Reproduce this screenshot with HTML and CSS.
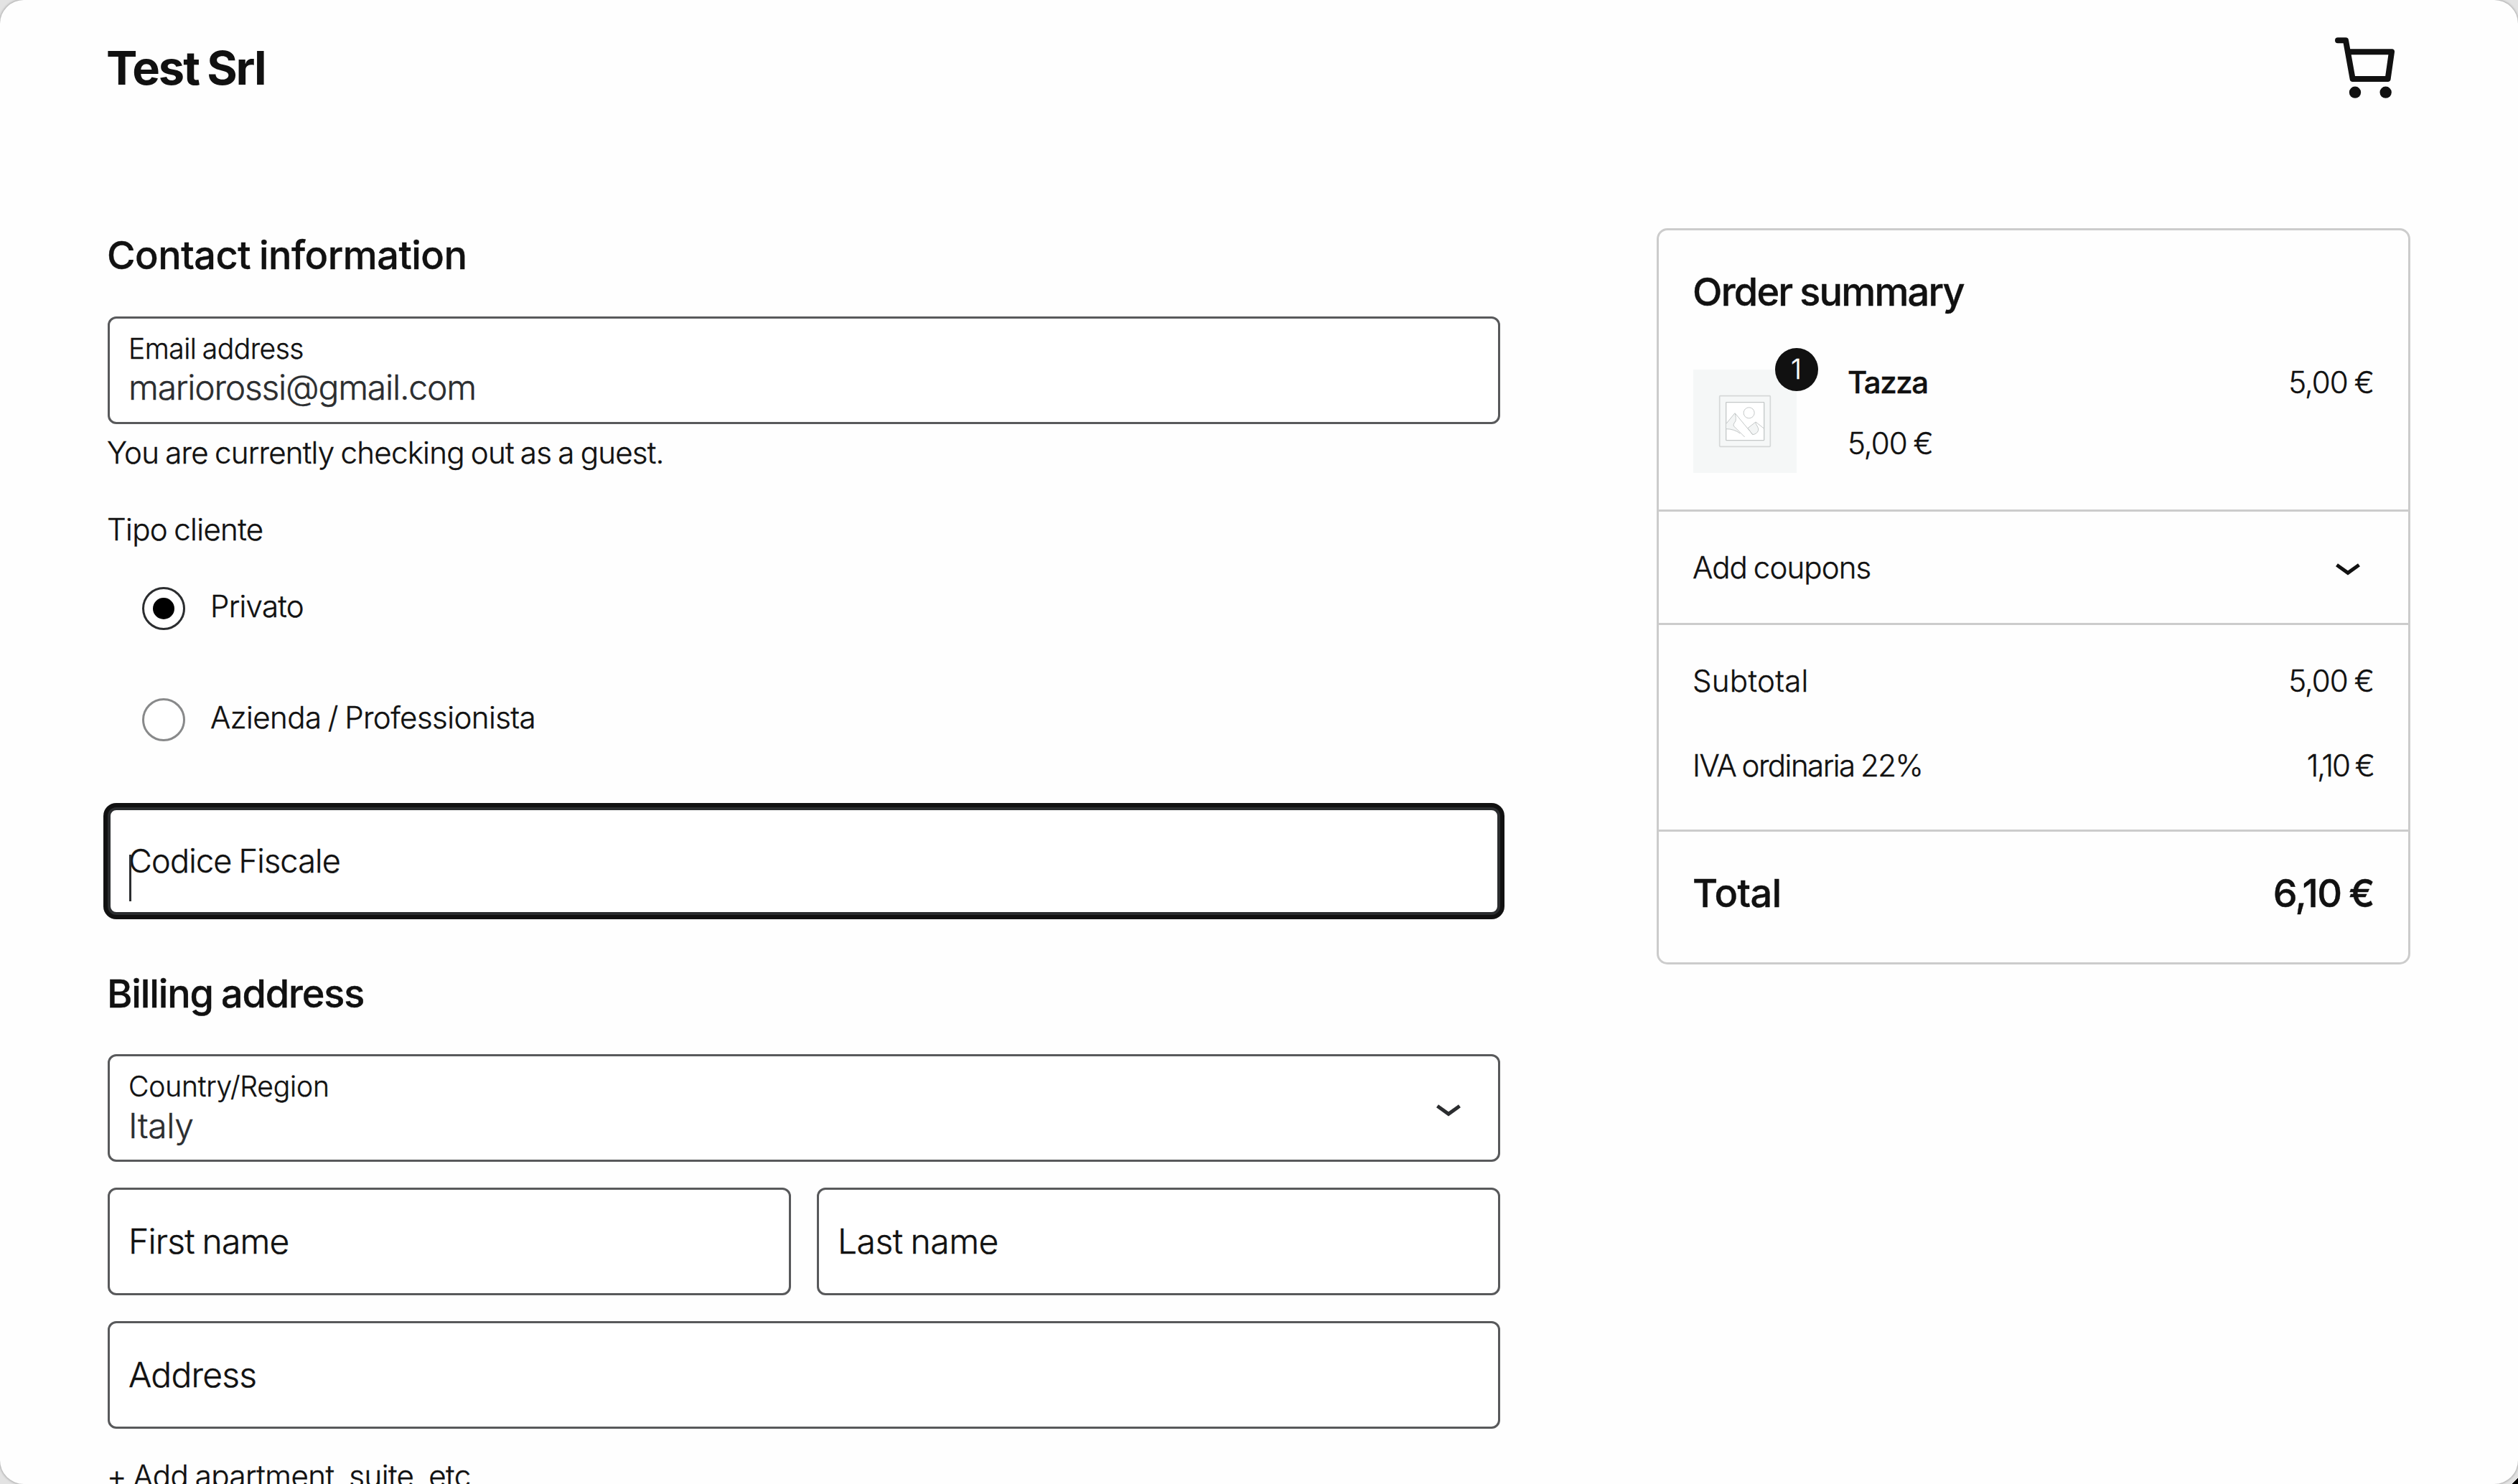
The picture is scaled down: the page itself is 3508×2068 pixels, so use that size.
FILE: index.html
```html
<!DOCTYPE html>
<html lang="en">
<head>
<meta charset="utf-8">
<title>Checkout – Test Srl</title>
<link rel="stylesheet" href="styles.css">
</head>
<body>
<div class="window">
  <header class="site-header">
    <div class="site-title">Test Srl</div>
    <svg class="cart-icon" viewBox="158 156 249 255" aria-hidden="true">
      <path d="M170 169H203L232 330H379L395 217H213" fill="none" stroke="currentColor" stroke-width="24" stroke-linecap="round" stroke-linejoin="round"/>
      <circle cx="242" cy="386" r="24.5" fill="currentColor"/>
      <circle cx="370" cy="386" r="24.5" fill="currentColor"/>
    </svg>
  </header>

  <div class="checkout">
    <main class="form">
      <h2 class="heading contact-heading">Contact information</h2>
      <div class="field field-filled">
        <span class="field-label email-label">Email address</span>
        <span class="field-value email-value">mariorossi@gmail.com</span>
      </div>
      <p class="guest-note">You are currently checking out as a guest.</p>

      <p class="group-label">Tipo cliente</p>
      <div class="radio-group">
        <div class="radio-row">
          <span class="radio radio-checked"></span>
          <span class="radio-text privato">Privato</span>
        </div>
        <div class="radio-row">
          <span class="radio"></span>
          <span class="radio-text azienda">Azienda / Professionista</span>
        </div>
      </div>

      <div class="field field-focused">
        <span class="field-placeholder moving-label">Codice Fiscale</span>
        <span class="caret"></span>
      </div>

      <h2 class="heading billing-heading">Billing address</h2>
      <div class="fields">
        <div class="field field-filled field-select">
          <span class="field-label">Country/Region</span>
          <span class="field-value country-value">Italy</span>
          <svg class="chevron select-chevron" viewBox="0 0 34 17" aria-hidden="true"><path d="M1.5 2.2L17 13.4L32.5 2.2"/></svg>
        </div>
        <div class="field-row">
          <div class="field"><span class="field-placeholder">First name</span></div>
          <div class="field"><span class="field-placeholder last-name">Last name</span></div>
        </div>
        <div class="field"><span class="field-placeholder">Address</span></div>
      </div>
      <p class="add-line">+ Add apartment, suite, etc</p>
    </main>

    <aside class="summary">
      <section class="summary-order">
        <h2 class="heading order-heading">Order summary</h2>
        <div class="item">
          <div class="thumb">
            <svg class="thumb-image" viewBox="0 0 432 432" aria-hidden="true">
              <rect width="432" height="432" fill="#f5f7f7"/>
              <g fill="none" stroke="#c4c8c8" stroke-width="3">
                <rect x="110" y="110" width="212" height="212" rx="3" stroke="#d5d8d8" stroke-width="5"/>
                <rect x="137" y="137" width="159" height="159" rx="2" fill="#fff" stroke-width="4"/>
                <path d="M138 226L174 182L177 215Q166 232 171 238L196 267Q170 249 138 248Z" fill="#f3f5f5" stroke="none"/>
                <path d="M228 245L261 219Q260 228 266 234Q274 246 272 254Q266 270 248 272Z" fill="#f3f5f5"/>
                <circle cx="233" cy="181" r="22.5"/>
                <path d="M138 226L174 182L248 271M175 184Q180 204 177 215Q164 232 170 237L215 282M138 248Q170 248 196 267M261 219L295 246"/>
              </g>
            </svg>
            <span class="badge">1</span>
          </div>
          <div class="item-info">
            <div class="item-head"><span class="item-name">Tazza</span><span class="price">5,00 €</span></div>
            <span class="price">5,00 €</span>
          </div>
        </div>
      </section>
      <section class="summary-coupons">
        <span class="coupons-text">Add coupons</span>
        <svg class="chevron coupons-chevron" viewBox="0 0 34 17" aria-hidden="true"><path d="M1.5 2.2L17 13.4L32.5 2.2"/></svg>
      </section>
      <section class="summary-lines">
        <div class="line"><span class="subtotal">Subtotal</span><span class="price">5,00 €</span></div>
        <div class="line"><span class="tax">IVA ordinaria 22%</span><span class="price tax-price">1,10 €</span></div>
      </section>
      <section class="summary-total">
        <span class="total-text">Total</span><span class="total-price">6,10 €</span>
      </section>
    </aside>
  </div>
</div>
</body>
</html>
```
FILE: styles.css
```css
* { box-sizing: border-box; }

html { height: 2068px; overflow: hidden; }

body {
  margin: 0;
  height: 2068px;
  overflow: hidden;
  background: linear-gradient(135deg, #e3e3e3 calc(100% - 6px), #000 calc(100% - 6px));
  color: #111;
  font-family: Inter, "Noto Sans", sans-serif;
  font-size: 42px;
  font-weight: 300;
  line-height: 60px;
  text-indent: -1px;
  word-spacing: -2px;
  -webkit-text-stroke: 0.4px currentColor;
}

h2, p { margin: 0; }

.window {
  height: 2068px;
  overflow: hidden;
  border-radius: 33px;
  background: #fefefe;
  box-shadow: 0 0 3px 1px #aaa;
}

/* Header */
.site-header {
  display: flex;
  justify-content: space-between;
  align-items: flex-start;
  height: 318px;
  padding: 50px 172px 0 149px;
}
.site-title {
  font-size: 65px;
  font-weight: 700;
  line-height: 90px;
  letter-spacing: -2.1px;
  -webkit-text-stroke: 0;
}
.cart-icon { width: 83px; height: 85px; margin-top: 2px; }

.checkout {
  display: grid;
  grid-template-columns: 1940px 1050px;
  justify-content: space-between;
  align-items: start;
  padding: 0 150px;
}

/* Form column */
.form { display: flex; flex-direction: column; padding-top: 3px; }
.heading { font-size: 54px; font-weight: 500; line-height: 70px; }
.contact-heading { margin-bottom: 50px; letter-spacing: -0.5px; }
.billing-heading { margin: 75px 0 49px; letter-spacing: -1.15px; }

.field {
  display: flex;
  align-items: center;
  height: 150px;
  padding: 0 27px;
  border: 3px solid #58595b;
  border-radius: 12px;
  background: #fff;
}
.field-filled {
  flex-direction: column;
  align-items: flex-start;
  gap: 6px;
  padding-top: 22px;
}
.field-label { font-size: 39px; line-height: 40px; letter-spacing: -0.18px; }
.email-label { letter-spacing: -0.5px; }
.field-value { color: #2b2d2f; font-size: 48px; line-height: 55px; }
.email-value { letter-spacing: -1.22px; }
.country-value { letter-spacing: -0.4px; line-height: 57px; }
.field-placeholder { font-size: 48px; line-height: 60px; letter-spacing: -0.8px; }
.last-name { letter-spacing: -0.5px; }

.guest-note { margin-top: 10px; letter-spacing: -0.73px; }
.group-label { margin-top: 47px; letter-spacing: -0.65px; }

.radio-group {
  display: flex;
  flex-direction: column;
  gap: 95px;
  margin-top: 50px;
  padding-left: 48px;
}
.radio-row { display: flex; gap: 36px; height: 60px; }
.radio {
  display: flex;
  width: 60px;
  height: 60px;
  border: 3px solid #88898a;
  border-radius: 50%;
  background: #fff;
}
.radio-checked { border-color: #2b2d2f; }
.radio-checked::after {
  content: "";
  width: 30px;
  height: 30px;
  margin: auto;
  border-radius: 50%;
  background: #000;
}
.radio-text { line-height: 53px; }
.privato { letter-spacing: -0.7px; }
.azienda { letter-spacing: -0.54px; }

.field-focused {
  position: relative;
  margin-top: 92px;
  padding: 0 26px;
  border: 4px solid #2b2d2f;
  box-shadow: 0 0 0 6px #111;
}
.moving-label { font-size: 45px; letter-spacing: -0.78px; }
.caret {
  position: absolute;
  left: 26px;
  top: 62px;
  width: 3px;
  height: 65px;
  background: #2b2d2f;
}

.fields { display: flex; flex-direction: column; gap: 36px; }
.field-row { display: grid; grid-template-columns: 1fr 1fr; gap: 36px; }
.field-select { position: relative; }
.chevron {
  width: 34px;
  height: 17px;
  fill: none;
  stroke: currentColor;
  stroke-width: 5;
}
.select-chevron { position: absolute; right: 52px; top: 67px; color: #2b2d2f; }
.coupons-chevron { margin-top: 5px; }
.add-line { margin-top: 36px; letter-spacing: -0.5px; white-space: nowrap; }

/* Order summary */
.summary {
  height: 1026px;
  border: 3px solid #ccc;
  border-radius: 15px;
}
.summary section { padding: 0 48px; }
.summary section + section { border-top: 3px solid #ccc; }
.summary .summary-order { height: 389px; padding-top: 51px; }
.order-heading { letter-spacing: -1.75px; }
.item { display: flex; gap: 72px; margin-top: 73px; }
.thumb { position: relative; width: 144px; height: 144px; }
.thumb-image { display: block; width: 144px; height: 144px; }
.badge {
  position: absolute;
  top: -30px;
  right: -30px;
  width: 60px;
  height: 60px;
  border-radius: 50%;
  background: #111;
  color: #fff;
  font-size: 38px;
  line-height: 59px;
  text-align: center;
}
.item-info {
  display: flex;
  flex: 1;
  flex-direction: column;
  gap: 25px;
  margin-top: -12px;
}
.item-head, .line { display: flex; justify-content: space-between; }
.item-name { font-weight: 500; letter-spacing: -1.5px; }
.price { letter-spacing: -0.95px; }
.summary .summary-coupons {
  display: flex;
  justify-content: space-between;
  align-items: center;
  height: 158px;
  padding: 0 67px 0 48px;
}
.coupons-text { letter-spacing: -0.9px; }
.summary .summary-lines {
  display: flex;
  flex-direction: column;
  gap: 58px;
  height: 288px;
  padding-top: 48px;
}
.subtotal { letter-spacing: 0.3px; }
.tax { letter-spacing: -1.5px; }
.tax-price { letter-spacing: -2px; }
.summary .summary-total {
  display: flex;
  justify-content: space-between;
  padding-top: 51px;
  font-size: 54px;
  font-weight: 500;
  line-height: 70px;
}
.total-text { letter-spacing: -0.6px; }
.total-price { letter-spacing: -1.6px; }
```
